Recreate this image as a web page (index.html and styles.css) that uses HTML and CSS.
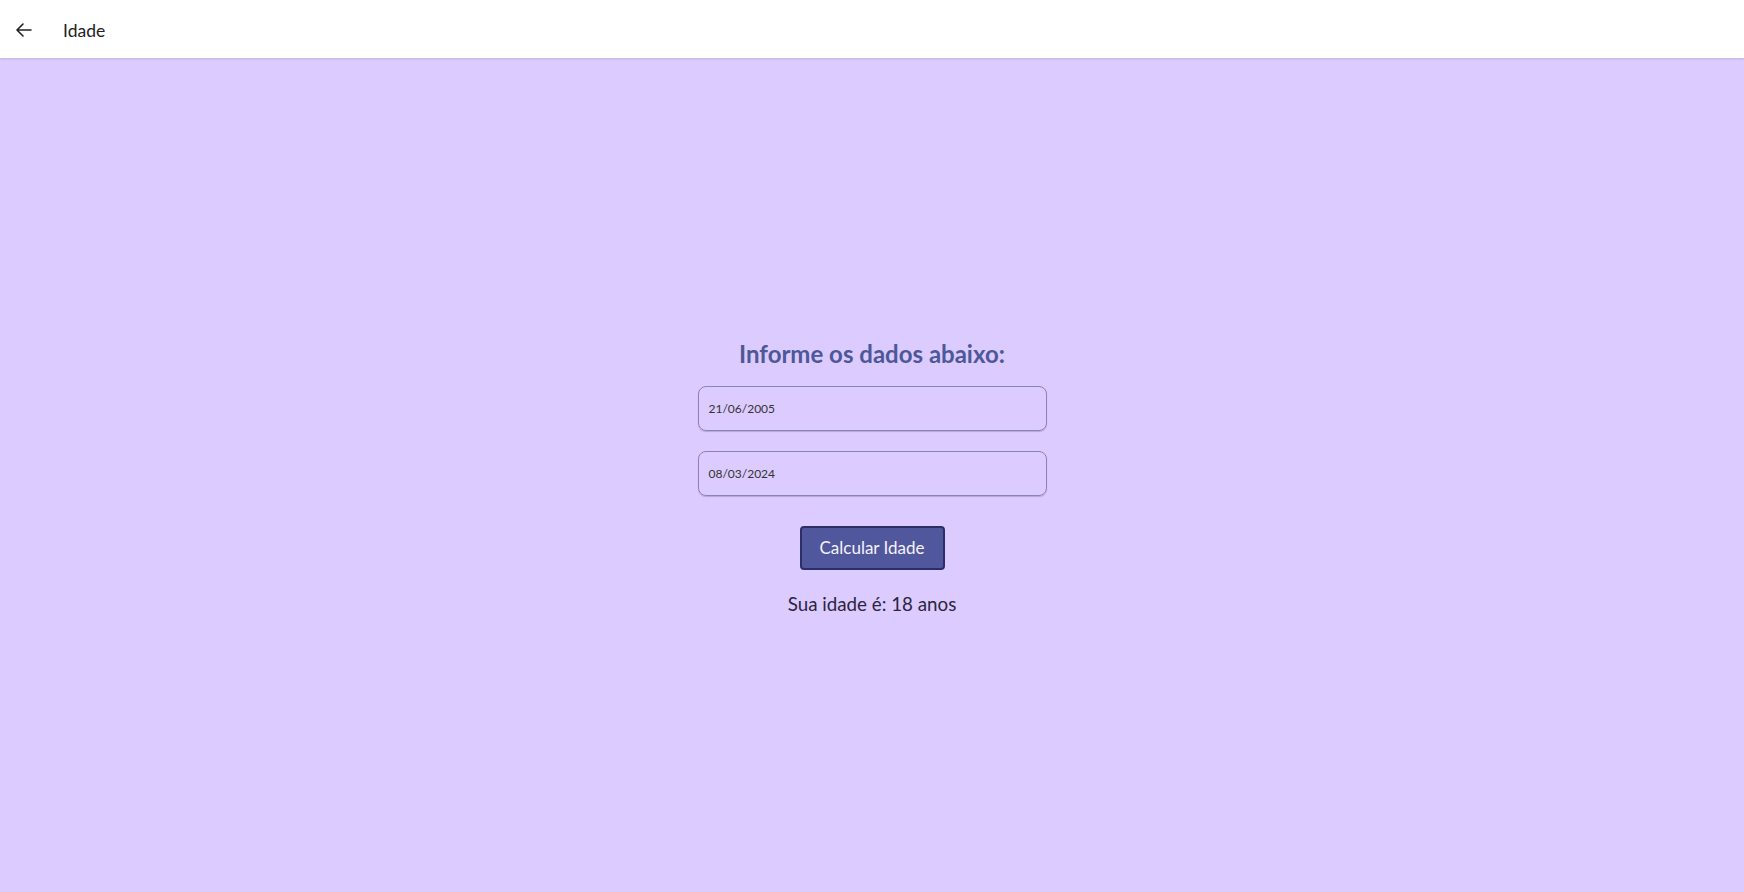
FILE: index.html
```html
<!DOCTYPE html>
<html lang="pt">
<head>
<meta charset="utf-8">
<title>Idade</title>
<link rel="stylesheet" href="styles.css">
</head>
<body>
<header class="topbar">
  <button class="back" aria-label="Voltar">
    <svg width="16" height="14" viewBox="0 0 16 14" fill="none" stroke="#222" stroke-width="1.6" stroke-linecap="round" stroke-linejoin="round"><path d="M15 7H1.5M7 1L1 7l6 6"/></svg>
  </button>
  <span class="title">Idade</span>
</header>
<main class="content">
  <div class="form">
    <h1 class="heading">Informe os dados abaixo:</h1>
    <div class="field">21/06/2005</div>
    <div class="field">08/03/2024</div>
    <button class="calc">Calcular Idade</button>
    <p class="result">Sua idade é: 18 anos</p>
  </div>
</main>
</body>
</html>
```
FILE: styles.css
```css
html, body {
  margin: 0;
  height: 100%;
}
body {
  font-family: "Lato", "Noto Sans", sans-serif;
  background: #dccbfe;
  display: flex;
  flex-direction: column;
}
.topbar {
  height: 58px;
  flex: none;
  background: #ffffff;
  display: flex;
  align-items: center;
  padding-left: 16px;
  box-shadow: 0 1px 2px rgba(0,0,0,0.12);
  position: relative;
  z-index: 1;
}
.back {
  border: 0;
  background: none;
  padding: 0;
  width: 16px;
  height: 14px;
  display: flex;
  margin-top: 2px;
}
.title {
  margin-left: 31px;
  font-size: 17.5px;
  color: #222;
  margin-top: 2px;
}
.content {
  flex: 1;
  display: flex;
  align-items: center;
  justify-content: center;
}
.form {
  display: flex;
  flex-direction: column;
  align-items: center;
  width: 349px;
  margin-top: 4px;
}
.heading {
  margin: 0 0 17px;
  font-size: 24px;
  font-weight: 700;
  color: #4e5899;
  line-height: 30px;
}
.field {
  box-sizing: border-box;
  width: 349px;
  height: 45px;
  border: 1px solid #8a84b6;
  border-radius: 8px;
  box-shadow: 0 1px 1px rgba(60,50,110,0.25);
  display: flex;
  align-items: center;
  padding-left: 10px;
  font-size: 12px;
  color: #333;
  margin-bottom: 20px;
}
.field + .field {
  margin-bottom: 30px;
}
.calc {
  box-sizing: border-box;
  width: 145px;
  height: 44px;
  background: #51579d;
  border: 2px solid #2c2e68;
  border-radius: 4px;
  color: #f4f2ff;
  font-family: inherit;
  font-size: 17px;
  padding: 0;
}
.result {
  margin: 22px 0 0;
  font-size: 18.75px;
  color: #2a2540;
  line-height: 24px;
}
```
